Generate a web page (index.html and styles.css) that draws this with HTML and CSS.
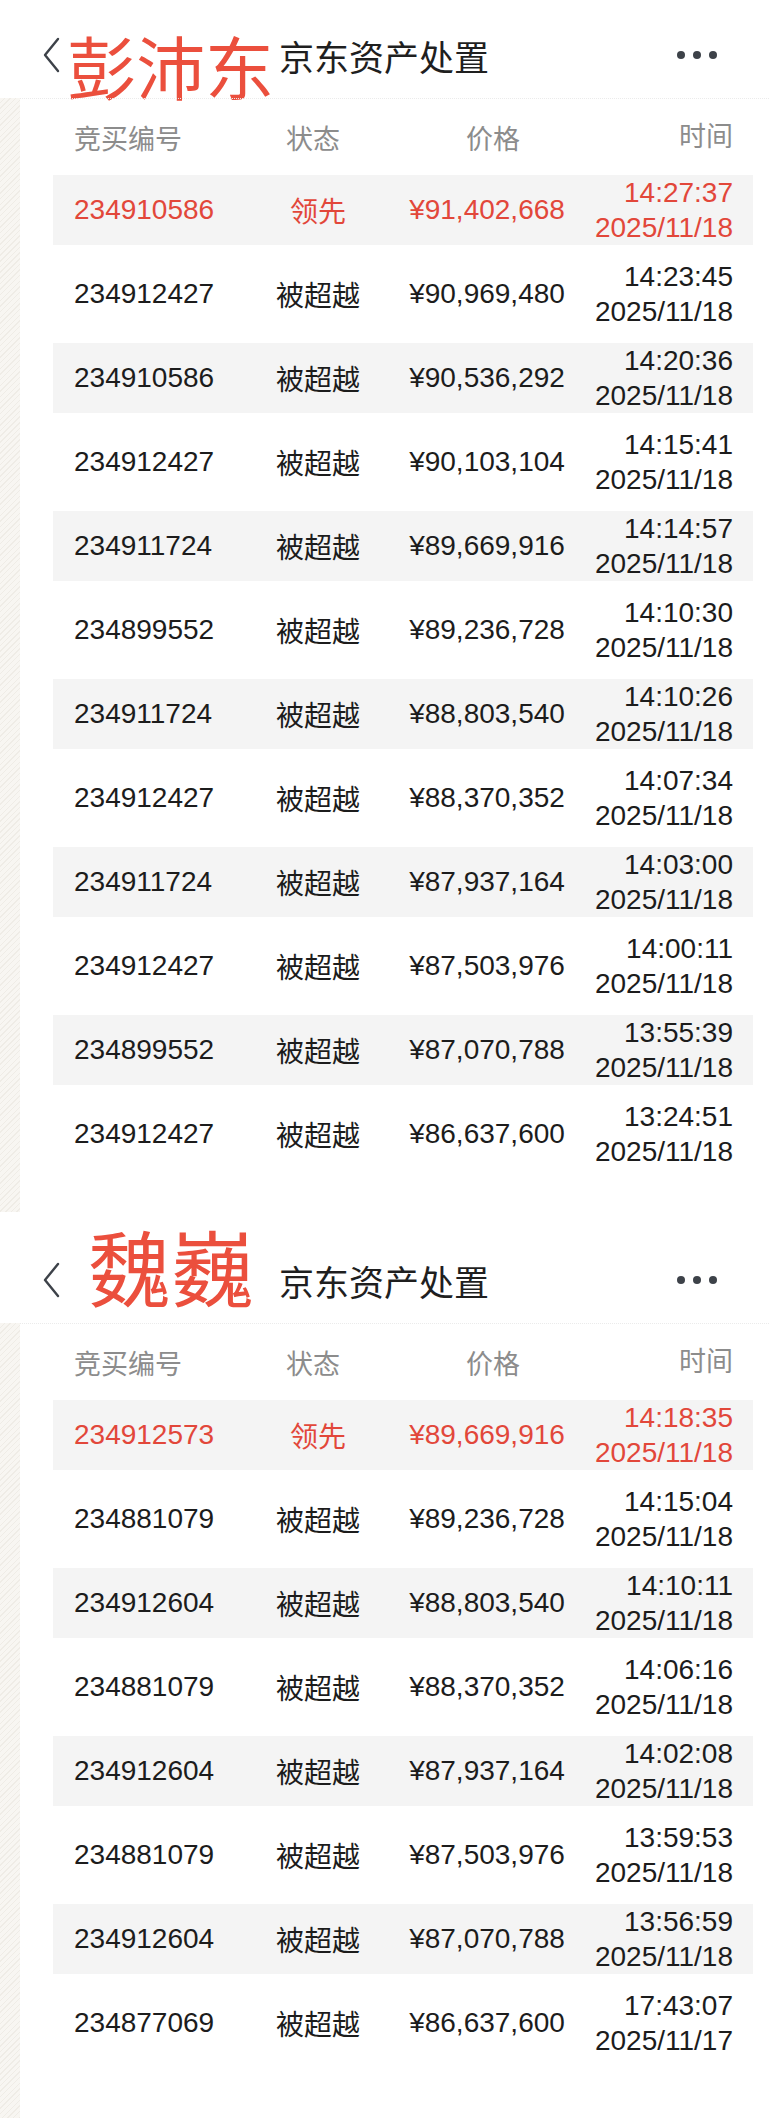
FILE: index.html
```html
<!DOCTYPE html>
<html>
<head lang="zh">
    <meta charset="UTF-8">
    <title>京东资产处置</title>
    <link rel="stylesheet" href="styles.css">
</head>
<body>
<div class="topbar">
    <svg class="back" width="18" height="36" viewBox="0 0 18 36"><polyline points="16,2 3,18 16,34" fill="none" stroke="#3d4249" stroke-width="2.4" stroke-linejoin="round" stroke-linecap="round"/></svg>
    <span class="name">彭沛东</span>
    <span class="title">京东资产处置</span>
    <span class="more"><i></i><i></i><i></i></span>
</div>
<section class="board">
    <div class="strip"></div>
    <div class="list">
        <div class="list-head">
            <span class="c-id">竞买编号</span>
            <span class="c-state">状态</span>
            <span class="c-price">价格</span>
            <span class="c-time">时间</span>
        </div>
        <ul class="rows">
            <li class="row lead"><span class="c-id">234910586</span><span class="c-state">领先</span><span class="c-price">¥91,402,668</span><span class="c-time">14:27:37<br>2025/11/18</span></li>
            <li class="row"><span class="c-id">234912427</span><span class="c-state">被超越</span><span class="c-price">¥90,969,480</span><span class="c-time">14:23:45<br>2025/11/18</span></li>
            <li class="row"><span class="c-id">234910586</span><span class="c-state">被超越</span><span class="c-price">¥90,536,292</span><span class="c-time">14:20:36<br>2025/11/18</span></li>
            <li class="row"><span class="c-id">234912427</span><span class="c-state">被超越</span><span class="c-price">¥90,103,104</span><span class="c-time">14:15:41<br>2025/11/18</span></li>
            <li class="row"><span class="c-id">234911724</span><span class="c-state">被超越</span><span class="c-price">¥89,669,916</span><span class="c-time">14:14:57<br>2025/11/18</span></li>
            <li class="row"><span class="c-id">234899552</span><span class="c-state">被超越</span><span class="c-price">¥89,236,728</span><span class="c-time">14:10:30<br>2025/11/18</span></li>
            <li class="row"><span class="c-id">234911724</span><span class="c-state">被超越</span><span class="c-price">¥88,803,540</span><span class="c-time">14:10:26<br>2025/11/18</span></li>
            <li class="row"><span class="c-id">234912427</span><span class="c-state">被超越</span><span class="c-price">¥88,370,352</span><span class="c-time">14:07:34<br>2025/11/18</span></li>
            <li class="row"><span class="c-id">234911724</span><span class="c-state">被超越</span><span class="c-price">¥87,937,164</span><span class="c-time">14:03:00<br>2025/11/18</span></li>
            <li class="row"><span class="c-id">234912427</span><span class="c-state">被超越</span><span class="c-price">¥87,503,976</span><span class="c-time">14:00:11<br>2025/11/18</span></li>
            <li class="row"><span class="c-id">234899552</span><span class="c-state">被超越</span><span class="c-price">¥87,070,788</span><span class="c-time">13:55:39<br>2025/11/18</span></li>
            <li class="row"><span class="c-id">234912427</span><span class="c-state">被超越</span><span class="c-price">¥86,637,600</span><span class="c-time">13:24:51<br>2025/11/18</span></li>
        </ul>
    </div>
</section>

<div class="topbar topbar-2">
    <svg class="back" width="18" height="36" viewBox="0 0 18 36"><polyline points="16,2 3,18 16,34" fill="none" stroke="#3d4249" stroke-width="2.4" stroke-linejoin="round" stroke-linecap="round"/></svg>
    <span class="name">魏巍</span>
    <span class="title">京东资产处置</span>
    <span class="more"><i></i><i></i><i></i></span>
</div>
<section class="board board-last">
    <div class="strip"></div>
    <div class="list">
        <div class="list-head">
            <span class="c-id">竞买编号</span>
            <span class="c-state">状态</span>
            <span class="c-price">价格</span>
            <span class="c-time">时间</span>
        </div>
        <ul class="rows">
            <li class="row lead"><span class="c-id">234912573</span><span class="c-state">领先</span><span class="c-price">¥89,669,916</span><span class="c-time">14:18:35<br>2025/11/18</span></li>
            <li class="row"><span class="c-id">234881079</span><span class="c-state">被超越</span><span class="c-price">¥89,236,728</span><span class="c-time">14:15:04<br>2025/11/18</span></li>
            <li class="row"><span class="c-id">234912604</span><span class="c-state">被超越</span><span class="c-price">¥88,803,540</span><span class="c-time">14:10:11<br>2025/11/18</span></li>
            <li class="row"><span class="c-id">234881079</span><span class="c-state">被超越</span><span class="c-price">¥88,370,352</span><span class="c-time">14:06:16<br>2025/11/18</span></li>
            <li class="row"><span class="c-id">234912604</span><span class="c-state">被超越</span><span class="c-price">¥87,937,164</span><span class="c-time">14:02:08<br>2025/11/18</span></li>
            <li class="row"><span class="c-id">234881079</span><span class="c-state">被超越</span><span class="c-price">¥87,503,976</span><span class="c-time">13:59:53<br>2025/11/18</span></li>
            <li class="row"><span class="c-id">234912604</span><span class="c-state">被超越</span><span class="c-price">¥87,070,788</span><span class="c-time">13:56:59<br>2025/11/18</span></li>
            <li class="row"><span class="c-id">234877069</span><span class="c-state">被超越</span><span class="c-price">¥86,637,600</span><span class="c-time">17:43:07<br>2025/11/17</span></li>
        </ul>
    </div>
</section>
</body>
</html>
```

FILE: styles.css
```css
*{
    margin: 0;
    padding: 0;
    box-sizing: border-box;
}
body{
    width: 769px;
    background: #ffffff;
    font-family: "Liberation Sans", "Noto Sans CJK SC", sans-serif;
    color: #1c1c1c;
}
li{
    list-style: none;
}

/* 顶部导航 */
.topbar{
    display: flex;
    align-items: center;
    height: 98px;
    padding: 12px 52px 0 42px;
    background: #ffffff;
}
.topbar .back{
    flex: none;
}
.topbar .name{
    margin: 21px 0 0 7px;
    font-family: "Noto Sans CJK SC", sans-serif;
    font-size: 69px;
    line-height: 1;
    color: #eb4f3d;
    white-space: nowrap;
}
.topbar .title{
    margin-left: 5px;
    font-family: "Noto Sans CJK SC", sans-serif;
    font-size: 35px;
    line-height: 1;
    color: #1f1f1f;
}
.topbar .more{
    display: flex;
    gap: 8px;
    margin-left: auto;
}
.topbar .more i{
    width: 8px;
    height: 8px;
    border-radius: 50%;
    background: #3d4249;
}
.topbar-2{
    height: 111px;
    padding-top: 25px;
}
.topbar-2 .name{
    margin: 0 25px 29px 28px;
    font-size: 83px;
}
.topbar-2 .title{
    margin-left: 0;
}

/* 出价列表 */
.board{
    display: flex;
    padding-bottom: 43px;
}
.board-last{
    padding-bottom: 60px;
}
.board .strip{
    flex: none;
    width: 20px;
    margin-bottom: -60px;
    background: repeating-linear-gradient(135deg, #f8f6f2 0, #f8f6f2 3px, #efece6 3px, #efece6 4px);
}
.board:not(.board-last) .strip{
    margin-bottom: -43px;
}
.list{
    flex: 1;
    padding: 0 16px 0 33px;
    border-top: 1px dotted #ebebeb;
}
.list-head, .row{
    display: grid;
    align-items: center;
    padding: 0 20px 0 21px;
}
.list-head{
    grid-template-columns: 160px 158px 202px 1fr;
    height: 76px;
    font-size: 27px;
    color: #8c8c8c;
}
.rows{
    display: flex;
    flex-direction: column;
    gap: 14px;
}
.row{
    grid-template-columns: 160px 168px 170px 1fr;
    height: 70px;
    font-size: 28px;
}
.rows .row:nth-child(odd){
    background: #f4f4f4;
}
.row.lead{
    color: #e2473a;
}
.c-state, .c-price{
    text-align: center;
    white-space: nowrap;
}
.c-time{
    text-align: right;
    line-height: 35px;
    white-space: nowrap;
}
```
